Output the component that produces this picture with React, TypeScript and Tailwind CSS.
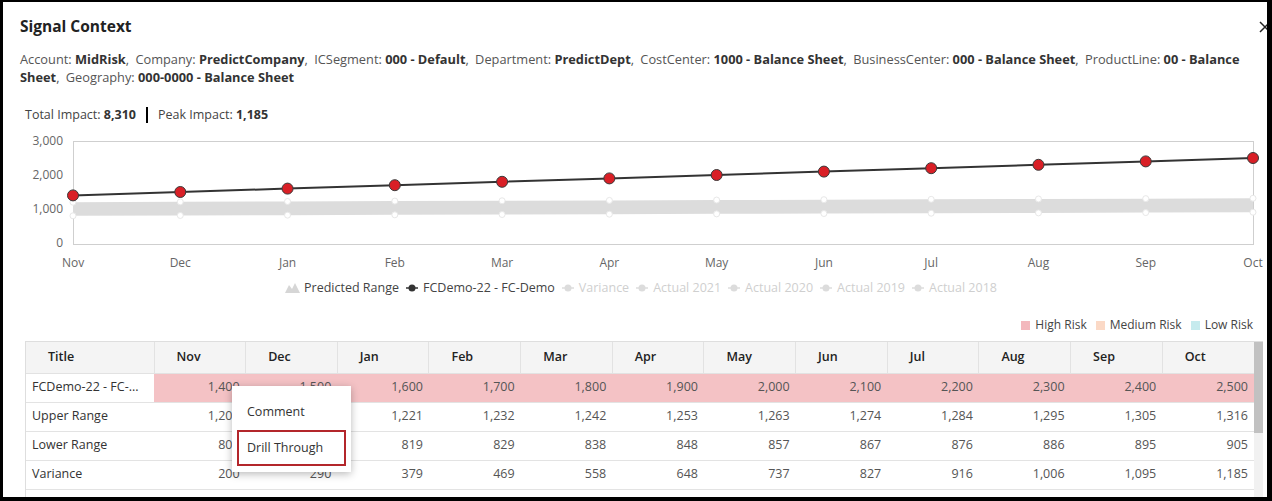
import React from 'react'

const months = ['Nov', 'Dec', 'Jan', 'Feb', 'Mar', 'Apr', 'May', 'Jun', 'Jul', 'Aug', 'Sep', 'Oct']
const forecast = [1400, 1500, 1600, 1700, 1800, 1900, 2000, 2100, 2200, 2300, 2400, 2500]
const upper = [1200, 1210, 1221, 1232, 1242, 1253, 1263, 1274, 1284, 1295, 1305, 1316]
const lower = [800, 810, 819, 829, 838, 848, 857, 867, 876, 886, 895, 905]
const variance = [200, 290, 379, 469, 558, 648, 737, 827, 916, 1006, 1095, 1185]

const context: [string, string][] = [
  ['Account', 'MidRisk'],
  ['Company', 'PredictCompany'],
  ['ICSegment', '000 - Default'],
  ['Department', 'PredictDept'],
  ['CostCenter', '1000 - Balance Sheet'],
  ['BusinessCenter', '000 - Balance Sheet'],
  ['ProductLine', '00 - Balance Sheet'],
  ['Geography', '000-0000 - Balance Sheet'],
]

const fmt = (n: number) => n.toLocaleString('en-US')

// chart geometry, in page coordinates (svg viewBox is offset to match)
const X0 = 73
const X1 = 1253
const Y0 = 243
const Y3000 = 141
const xAt = (i: number) => X0 + (i * (X1 - X0)) / 11
const yAt = (v: number) => Y0 - (v / 3000) * (Y0 - Y3000)

function Chart() {
  const band =
    upper.map((v, i) => `${xAt(i)},${yAt(v)}`).join(' ') +
    ' ' +
    lower
      .map((v, i) => `${xAt(i)},${yAt(v)}`)
      .reverse()
      .join(' ')
  const line = forecast.map((v, i) => `${xAt(i)},${yAt(v)}`).join(' ')
  return (
    <svg width={1242} height={145} viewBox="25 130 1242 145" className="block">
      <rect x={X0 + 0.5} y={Y3000 + 0.5} width={X1 - X0} height={Y0 - Y3000 + 1} fill="white" stroke="#cfcfcf" />
      {[3000, 2000, 1000, 0].map(v => (
        <text key={v} x={63} y={yAt(v) + 4} textAnchor="end" fontSize={12} fill="#666">
          {fmt(v)}
        </text>
      ))}
      {months.map((m, i) => (
        <text key={m} x={xAt(i)} y={267} textAnchor="middle" fontSize={12} fill="#666">
          {m}
        </text>
      ))}
      <polygon points={band} fill="#dcdcdc" />
      {upper.map((v, i) => (
        <circle key={'u' + i} cx={xAt(i)} cy={yAt(v)} r={3} fill="white" stroke="#e8e8e8" />
      ))}
      {lower.map((v, i) => (
        <circle key={'l' + i} cx={xAt(i)} cy={yAt(v)} r={3} fill="white" stroke="#e8e8e8" />
      ))}
      <polyline points={line} fill="none" stroke="#333" strokeWidth={2} />
      {forecast.map((v, i) => (
        <circle key={'f' + i} cx={xAt(i)} cy={yAt(v)} r={5.5} fill="#d91f26" stroke="#3a3a3a" strokeWidth={1} />
      ))}
    </svg>
  )
}

function Marker({ color }: { color: string }) {
  return (
    <svg width={12} height={10} viewBox="0 0 12 10" className="shrink-0">
      <line x1={0} y1={5} x2={12} y2={5} stroke={color} strokeWidth={1.5} />
      <circle cx={6} cy={5} r={3.5} fill={color} />
    </svg>
  )
}

function Legend() {
  const faded = ['Variance', 'Actual 2021', 'Actual 2020', 'Actual 2019', 'Actual 2018']
  return (
    <div className="flex h-[18px] items-center justify-center gap-[7px] pl-[12px] text-[12.5px]">
      <div className="flex items-center gap-[4px] text-[#444]">
        <svg width={15} height={10} viewBox="0 0 15 10" className="shrink-0">
          <polygon points="0,10 4,2 7,6 10,0 15,10" fill="#d6d6d6" />
        </svg>
        Predicted Range
      </div>
      <div className="flex items-center gap-[5px] text-[#444]">
        <Marker color="#333" />
        FCDemo-22 - FC-Demo
      </div>
      {faded.map(f => (
        <div key={f} className="flex items-center gap-[5px] text-[#cfcfcf]">
          <Marker color="#dcdcdc" />
          {f}
        </div>
      ))}
    </div>
  )
}

function RiskLegend() {
  const items = [
    ['High Risk', 'bg-[#f3b8bd]'],
    ['Medium Risk', 'bg-[#fbd9c6]'],
    ['Low Risk', 'bg-[#c6ebee]'],
  ]
  return (
    <div className="flex h-[18px] items-center justify-end gap-[9px] pr-[14px] text-[12px] text-[#444]">
      {items.map(([label, cls]) => (
        <div key={label} className="flex items-center gap-[5px]">
          <span className={`inline-block h-[9px] w-[9px] ${cls}`} />
          {label}
        </div>
      ))}
    </div>
  )
}

function DataTable() {
  const rows: { title: string; values: number[]; risk?: boolean }[] = [
    { title: 'FCDemo-22 - FC-...', values: forecast, risk: true },
    { title: 'Upper Range', values: upper },
    { title: 'Lower Range', values: lower },
    { title: 'Variance', values: variance },
  ]
  return (
    <div className="relative ml-[22px] mr-[4px] flex h-[160px] border border-[#dedede]">
      <table className="w-[1228px] shrink-0 table-fixed border-collapse text-[12.5px]">
        <colgroup>
          <col className="w-[128px]" />
          {months.map(m => (
            <col key={m} />
          ))}
        </colgroup>
        <thead>
          <tr className="h-[31px] bg-[#f4f4f4]">
            <th className="border-r border-b border-[#e2e2e2] pl-[22px] text-left font-semibold text-[#222]">Title</th>
            {months.map(m => (
              <th key={m} className="border-r border-b border-[#e2e2e2] pl-[22px] text-left font-semibold text-[#222] last:border-r-0">
                {m}
              </th>
            ))}
          </tr>
        </thead>
        <tbody>
          {rows.map(r => (
            <tr key={r.title} className="h-[29px] border-b border-[#e3e3e3]">
              <td className="truncate pl-[6px] text-[#333]">{r.title}</td>
              {r.values.map((v, i) => (
                <td key={i} className={`pr-[6px] text-right text-[#555] ${r.risk ? 'bg-[#f4c2c5]' : ''}`}>
                  {fmt(v)}
                </td>
              ))}
            </tr>
          ))}
          <tr className="h-[29px]">
            <td colSpan={13} />
          </tr>
        </tbody>
      </table>
      <div className="w-[9px] shrink-0 bg-[#f1f1f1]">
        <div className="h-[91px] bg-[#c1c1c1]" />
      </div>

      <div className="absolute left-[206px] top-[44px] w-[119px] bg-white pt-[14px] pb-[6px] text-[12.5px] text-[#333] shadow-[0_2px_8px_rgba(0,0,0,0.28)]">
        <div className="flex h-[24px] items-center px-[15px]">Comment</div>
        <div className="mx-[5px] mt-[6px] flex h-[36px] items-center border-2 border-[#b3262b] pl-[8px]">Drill Through</div>
      </div>
    </div>
  )
}

export default function App() {
  return (
    <div className="h-[501px] w-[1272px] bg-black pt-[2px] pr-[5px] pb-[4px] pl-[3px] font-['Open_Sans',sans-serif]">
      <div className="relative h-full w-full overflow-hidden bg-white">
        <svg
          width={12}
          height={12}
          viewBox="0 0 12 12"
          className="absolute right-[-4px] top-[19px]"
        >
          <path d="M1 1 L11 11 M11 1 L1 11" stroke="#222" strokeWidth={1.5} />
        </svg>

        <div className="pl-[17px] pt-[14px] text-[15.5px] leading-[20px] font-bold text-[#222]">Signal Context</div>

        <div className="mt-[14px] pl-[17px] pr-[20px] text-[12.8px] leading-[18px] text-[#555]">
          {context.map(([k, v], i) => (
            <React.Fragment key={k}>
              <span>{k}: </span>
              <span className="font-bold text-[#333]">{v}</span>
              {i < context.length - 1 ? <span className="mr-[3px]">,  </span> : null}
            </React.Fragment>
          ))}
        </div>

        <div className="mt-[20px] flex h-[18px] items-center pl-[22px] text-[12.5px] text-[#444]">
          <span>Total Impact:&nbsp;</span>
          <span className="font-bold text-[#333]">8,310</span>
          <span className="mx-[10px] h-[16px] w-[2px] bg-black" />
          <span>Peak Impact:&nbsp;</span>
          <span className="font-bold text-[#333]">1,185</span>
        </div>

        <div className="mt-[6px] pl-[22px]">
          <Chart />
        </div>

        <div className="mt-[4px]">
          <Legend />
        </div>

        <div className="mt-[19px]">
          <RiskLegend />
        </div>

        <div className="mt-[7px]">
          <DataTable />
        </div>
      </div>
    </div>
  )
}
